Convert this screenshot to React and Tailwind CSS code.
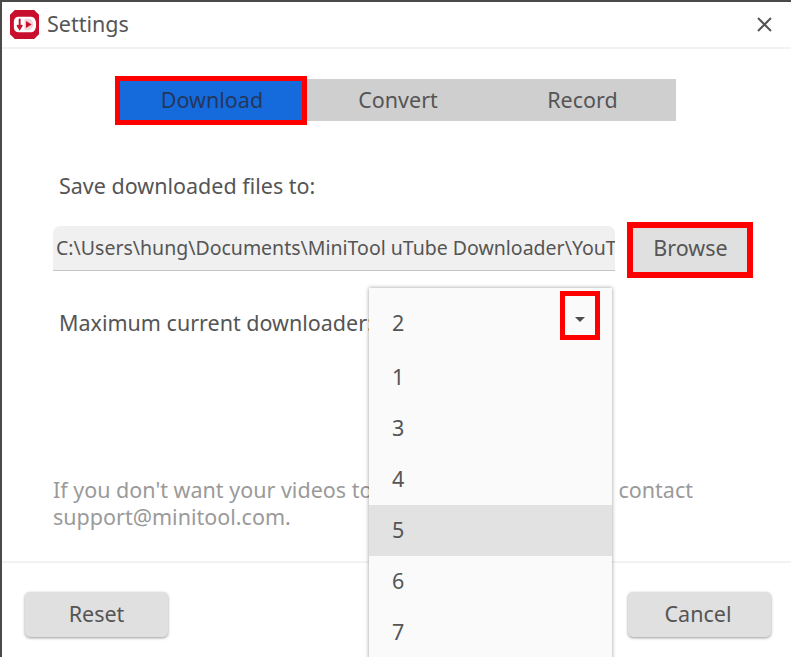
import React from "react";

function Logo() {
  return (
    <svg width="29" height="29" viewBox="0 0 30 30" className="shrink-0">
      <path d="M5 0h20l5 5v20l-5 5H5l-5-5V5z" fill="#c8102e" />
      <path d="M4 12c0-3 2-5 5-5h13c3 0 5 3 5 8s-2 8-5 8H9c-3 0-5-2-5-5z" fill="#ffffff" />
      <path d="M10 9v9M7.5 15.5L10 19.5l2.5-4" stroke="#c8102e" strokeWidth="2" fill="none" />
      <path d="M15 9v6l0 6h3c3 0 6-2 6-6s-3-6-6-6z" fill="#f3d4d9" />
      <path d="M16.5 11.5l6 3.5-6 3.5z" fill="#c8102e" />
    </svg>
  );
}

export default function App() {
  const items = ["1", "3", "4", "5", "6", "7"];
  return (
    <div className="relative flex h-[657px] w-[791px] flex-col overflow-hidden border-l-2 border-t-2 border-[#4a4a4a] bg-white font-['Noto_Sans',sans-serif] text-[21.5px] text-[#555555]">
      <div className="-ml-[2px] flex h-[47px] shrink-0 items-center border-b-2 border-l-2 border-b-[#f2f2f2] border-l-[#d4d4d4] pl-[8px] pr-[19px]">
        <Logo />
        <span className="ml-[8px]">Settings</span>
        <svg width="15" height="15" viewBox="0 0 15 15" className="ml-auto" stroke="#555555" strokeWidth="2">
          <path d="M1 1l13 13M14 1L1 14" />
        </svg>
      </div>

      <div className="flex h-[512px] shrink-0 flex-col">
        <div className="ml-[113px] mt-[27px] flex items-start">
          <div className="flex h-[49px] w-[192px] items-center justify-center border-[5px] border-[#ff0000] bg-[#156bdc] pl-[2px] text-[#24375c]">
            Download
          </div>
          <div className="mt-[3px] flex h-[42px] w-[369px] items-center bg-[#cfcfcf]">
            <span className="w-[182px] text-center">Convert</span>
            <span className="w-[187px] text-center">Record</span>
          </div>
        </div>

        <div className="ml-[57px] mt-[47px] leading-[28px]">Save downloaded files to:</div>

        <div className="ml-[51px] mt-[22px] flex items-start">
          <div className="mt-[4px] flex h-[45px] w-[562px] items-center overflow-hidden whitespace-nowrap rounded-t-[7px] border-b border-[#c4c4c4] bg-[#f0f0f0] pl-[3px] text-[19.5px]">
            C:\Users\hung\Documents\MiniTool uTube Downloader\YouT
          </div>
          <div className="ml-[12px] flex h-[56px] w-[126px] items-center justify-center border-[6px] border-[#ff0000] bg-[#e0e0e0] pb-[3px] pl-[1px]">
            Browse
          </div>
        </div>

        <div className="ml-[57px] mt-[31px] leading-[28px]">Maximum current downloader:</div>

        <div className="ml-[51px] mt-[139px] w-[660px] leading-[27px] text-[#9a9a9a]">
          If you don't want your videos to <span className="pr-[2px]">be downloaded, please</span> contact support@minitool.com.
        </div>
      </div>

      <div className="flex flex-1 items-start justify-between border-t-2 border-[#f2f2f2] pl-[23px] pr-[20px] pt-[29px]">
        <div className="flex h-[45px] w-[143px] items-center justify-center rounded-[5px] bg-[#e0e0e0] shadow-[0_1px_3px_rgba(0,0,0,0.4)]">
          Reset
        </div>
        <div className="flex h-[45px] w-[143px] items-center justify-center rounded-[5px] bg-[#e0e0e0] pr-[3px] shadow-[0_1px_3px_rgba(0,0,0,0.4)]">
          Cancel
        </div>
      </div>

      <div className="absolute left-[367px] top-[286px] h-[380px] w-[243px] bg-[#fafafa] shadow-[0_0_4px_rgba(0,0,0,0.4)]">
        <div className="flex h-[64px] items-center pl-[23px] pt-[6px]">2</div>
        {items.map((n) => (
          <div
            key={n}
            className={`flex h-[51px] items-center pl-[23px] ${n === "5" ? "bg-[#e2e2e2]" : ""}`}
          >
            {n}
          </div>
        ))}
        <div className="absolute left-[191px] top-[3px] flex h-[49px] w-[40px] items-center justify-center border-[5px] border-[#ff0000]">
          <svg width="10" height="5" viewBox="0 0 10 5" className="mt-[8px]">
            <path d="M0 0h10L5 5z" fill="#4d4d4d" />
          </svg>
        </div>
      </div>
    </div>
  );
}
